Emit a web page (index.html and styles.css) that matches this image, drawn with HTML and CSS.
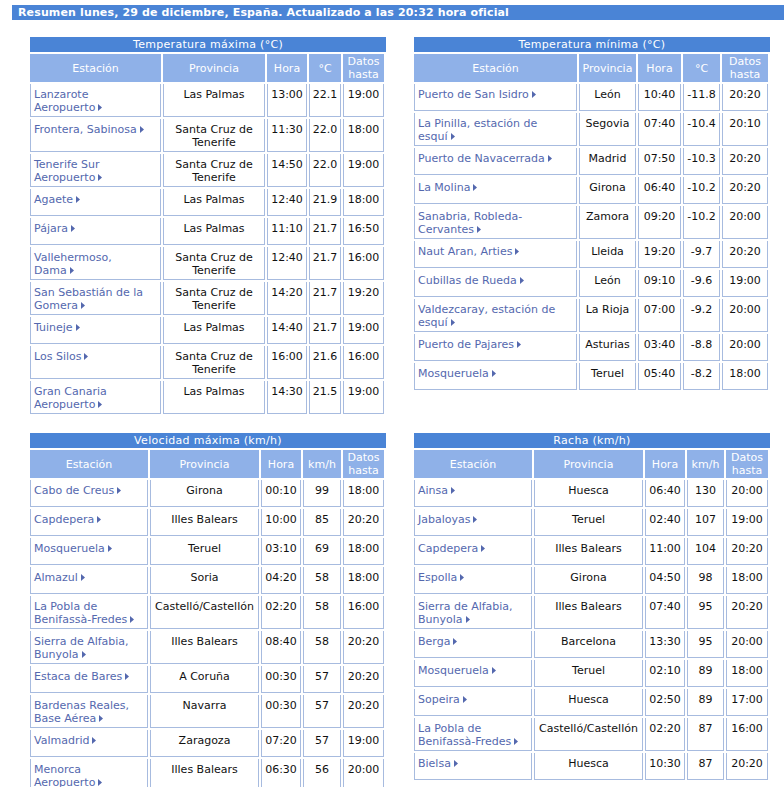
FILE: index.html
```html
<!DOCTYPE html>
<html lang="es">
<head>
<meta charset="utf-8">
<title>Resumen</title>
<link rel="stylesheet" href="styles.css">
</head>
<body>
<div class="topbar">Resumen lunes, 29 de diciembre, España. Actualizado a las 20:32 hora oficial</div>
<div class="grid">

<section class="block">
<div class="title">Temperatura máxima (°C)</div>
<table class="t">
<thead><tr>
<th class="c1a">Estación</th><th class="c2a">Provincia</th><th class="c3a">Hora</th><th class="c4a">°C</th><th class="c5a">Datos<br>hasta</th>
</tr></thead>
<tbody>
<tr><td class="st"><div class="in">Lanzarote<br>Aeropuerto<svg class="ar" width="4" height="7" viewBox="0 0 4 7"><polygon points="0,0 4,3.5 0,7"/></svg></div></td><td><div class="in">Las Palmas</div></td><td><div class="in">13:00</div></td><td><div class="in">22.1</div></td><td><div class="in">19:00</div></td></tr>
<tr><td class="st"><div class="in">Frontera, Sabinosa<svg class="ar" width="4" height="7" viewBox="0 0 4 7"><polygon points="0,0 4,3.5 0,7"/></svg></div></td><td><div class="in">Santa Cruz de<br>Tenerife</div></td><td><div class="in">11:30</div></td><td><div class="in">22.0</div></td><td><div class="in">18:00</div></td></tr>
<tr><td class="st"><div class="in">Tenerife Sur<br>Aeropuerto<svg class="ar" width="4" height="7" viewBox="0 0 4 7"><polygon points="0,0 4,3.5 0,7"/></svg></div></td><td><div class="in">Santa Cruz de<br>Tenerife</div></td><td><div class="in">14:50</div></td><td><div class="in">22.0</div></td><td><div class="in">19:00</div></td></tr>
<tr><td class="st"><div class="in">Agaete<svg class="ar" width="4" height="7" viewBox="0 0 4 7"><polygon points="0,0 4,3.5 0,7"/></svg></div></td><td><div class="in">Las Palmas</div></td><td><div class="in">12:40</div></td><td><div class="in">21.9</div></td><td><div class="in">18:00</div></td></tr>
<tr><td class="st"><div class="in">Pájara<svg class="ar" width="4" height="7" viewBox="0 0 4 7"><polygon points="0,0 4,3.5 0,7"/></svg></div></td><td><div class="in">Las Palmas</div></td><td><div class="in">11:10</div></td><td><div class="in">21.7</div></td><td><div class="in">16:50</div></td></tr>
<tr><td class="st"><div class="in">Vallehermoso,<br>Dama<svg class="ar" width="4" height="7" viewBox="0 0 4 7"><polygon points="0,0 4,3.5 0,7"/></svg></div></td><td><div class="in">Santa Cruz de<br>Tenerife</div></td><td><div class="in">12:40</div></td><td><div class="in">21.7</div></td><td><div class="in">16:00</div></td></tr>
<tr><td class="st"><div class="in">San Sebastián de la<br>Gomera<svg class="ar" width="4" height="7" viewBox="0 0 4 7"><polygon points="0,0 4,3.5 0,7"/></svg></div></td><td><div class="in">Santa Cruz de<br>Tenerife</div></td><td><div class="in">14:20</div></td><td><div class="in">21.7</div></td><td><div class="in">19:20</div></td></tr>
<tr><td class="st"><div class="in">Tuineje<svg class="ar" width="4" height="7" viewBox="0 0 4 7"><polygon points="0,0 4,3.5 0,7"/></svg></div></td><td><div class="in">Las Palmas</div></td><td><div class="in">14:40</div></td><td><div class="in">21.7</div></td><td><div class="in">19:00</div></td></tr>
<tr><td class="st"><div class="in">Los Silos<svg class="ar" width="4" height="7" viewBox="0 0 4 7"><polygon points="0,0 4,3.5 0,7"/></svg></div></td><td><div class="in">Santa Cruz de<br>Tenerife</div></td><td><div class="in">16:00</div></td><td><div class="in">21.6</div></td><td><div class="in">16:00</div></td></tr>
<tr><td class="st"><div class="in">Gran Canaria<br>Aeropuerto<svg class="ar" width="4" height="7" viewBox="0 0 4 7"><polygon points="0,0 4,3.5 0,7"/></svg></div></td><td><div class="in">Las Palmas</div></td><td><div class="in">14:30</div></td><td><div class="in">21.5</div></td><td><div class="in">19:00</div></td></tr>
</tbody>
</table>
</section>

<section class="block">
<div class="title">Temperatura mínima (°C)</div>
<table class="t">
<thead><tr>
<th class="c1b">Estación</th><th class="c2b">Provincia</th><th class="c3b">Hora</th><th class="c4b">°C</th><th class="c5b">Datos<br>hasta</th>
</tr></thead>
<tbody>
<tr><td class="st"><div class="in">Puerto de San Isidro<svg class="ar" width="4" height="7" viewBox="0 0 4 7"><polygon points="0,0 4,3.5 0,7"/></svg></div></td><td><div class="in">León</div></td><td><div class="in">10:40</div></td><td><div class="in">-11.8</div></td><td><div class="in">20:20</div></td></tr>
<tr><td class="st"><div class="in">La Pinilla, estación de<br>esquí<svg class="ar" width="4" height="7" viewBox="0 0 4 7"><polygon points="0,0 4,3.5 0,7"/></svg></div></td><td><div class="in">Segovia</div></td><td><div class="in">07:40</div></td><td><div class="in">-10.4</div></td><td><div class="in">20:10</div></td></tr>
<tr><td class="st"><div class="in">Puerto de Navacerrada<svg class="ar" width="4" height="7" viewBox="0 0 4 7"><polygon points="0,0 4,3.5 0,7"/></svg></div></td><td><div class="in">Madrid</div></td><td><div class="in">07:50</div></td><td><div class="in">-10.3</div></td><td><div class="in">20:20</div></td></tr>
<tr><td class="st"><div class="in">La Molina<svg class="ar" width="4" height="7" viewBox="0 0 4 7"><polygon points="0,0 4,3.5 0,7"/></svg></div></td><td><div class="in">Girona</div></td><td><div class="in">06:40</div></td><td><div class="in">-10.2</div></td><td><div class="in">20:20</div></td></tr>
<tr><td class="st"><div class="in">Sanabria, Robleda-<br>Cervantes<svg class="ar" width="4" height="7" viewBox="0 0 4 7"><polygon points="0,0 4,3.5 0,7"/></svg></div></td><td><div class="in">Zamora</div></td><td><div class="in">09:20</div></td><td><div class="in">-10.2</div></td><td><div class="in">20:00</div></td></tr>
<tr><td class="st"><div class="in">Naut Aran, Arties<svg class="ar" width="4" height="7" viewBox="0 0 4 7"><polygon points="0,0 4,3.5 0,7"/></svg></div></td><td><div class="in">Lleida</div></td><td><div class="in">19:20</div></td><td><div class="in">-9.7</div></td><td><div class="in">20:20</div></td></tr>
<tr><td class="st"><div class="in">Cubillas de Rueda<svg class="ar" width="4" height="7" viewBox="0 0 4 7"><polygon points="0,0 4,3.5 0,7"/></svg></div></td><td><div class="in">León</div></td><td><div class="in">09:10</div></td><td><div class="in">-9.6</div></td><td><div class="in">19:00</div></td></tr>
<tr><td class="st"><div class="in">Valdezcaray, estación de<br>esquí<svg class="ar" width="4" height="7" viewBox="0 0 4 7"><polygon points="0,0 4,3.5 0,7"/></svg></div></td><td><div class="in">La Rioja</div></td><td><div class="in">07:00</div></td><td><div class="in">-9.2</div></td><td><div class="in">20:00</div></td></tr>
<tr><td class="st"><div class="in">Puerto de Pajares<svg class="ar" width="4" height="7" viewBox="0 0 4 7"><polygon points="0,0 4,3.5 0,7"/></svg></div></td><td><div class="in">Asturias</div></td><td><div class="in">03:40</div></td><td><div class="in">-8.8</div></td><td><div class="in">20:00</div></td></tr>
<tr><td class="st"><div class="in">Mosqueruela<svg class="ar" width="4" height="7" viewBox="0 0 4 7"><polygon points="0,0 4,3.5 0,7"/></svg></div></td><td><div class="in">Teruel</div></td><td><div class="in">05:40</div></td><td><div class="in">-8.2</div></td><td><div class="in">18:00</div></td></tr>
</tbody>
</table>
</section>

<section class="block">
<div class="title">Velocidad máxima (km/h)</div>
<table class="t">
<thead><tr>
<th class="c1c">Estación</th><th class="c2c">Provincia</th><th class="c3c">Hora</th><th class="c4c">km/h</th><th class="c5c">Datos<br>hasta</th>
</tr></thead>
<tbody>
<tr><td class="st"><div class="in">Cabo de Creus<svg class="ar" width="4" height="7" viewBox="0 0 4 7"><polygon points="0,0 4,3.5 0,7"/></svg></div></td><td><div class="in">Girona</div></td><td><div class="in">00:10</div></td><td><div class="in">99</div></td><td><div class="in">18:00</div></td></tr>
<tr><td class="st"><div class="in">Capdepera<svg class="ar" width="4" height="7" viewBox="0 0 4 7"><polygon points="0,0 4,3.5 0,7"/></svg></div></td><td><div class="in">Illes Balears</div></td><td><div class="in">10:00</div></td><td><div class="in">85</div></td><td><div class="in">20:20</div></td></tr>
<tr><td class="st"><div class="in">Mosqueruela<svg class="ar" width="4" height="7" viewBox="0 0 4 7"><polygon points="0,0 4,3.5 0,7"/></svg></div></td><td><div class="in">Teruel</div></td><td><div class="in">03:10</div></td><td><div class="in">69</div></td><td><div class="in">18:00</div></td></tr>
<tr><td class="st"><div class="in">Almazul<svg class="ar" width="4" height="7" viewBox="0 0 4 7"><polygon points="0,0 4,3.5 0,7"/></svg></div></td><td><div class="in">Soria</div></td><td><div class="in">04:20</div></td><td><div class="in">58</div></td><td><div class="in">18:00</div></td></tr>
<tr><td class="st"><div class="in">La Pobla de<br>Benifassà-Fredes<svg class="ar" width="4" height="7" viewBox="0 0 4 7"><polygon points="0,0 4,3.5 0,7"/></svg></div></td><td><div class="in">Castelló/Castellón</div></td><td><div class="in">02:20</div></td><td><div class="in">58</div></td><td><div class="in">16:00</div></td></tr>
<tr><td class="st"><div class="in">Sierra de Alfabia,<br>Bunyola<svg class="ar" width="4" height="7" viewBox="0 0 4 7"><polygon points="0,0 4,3.5 0,7"/></svg></div></td><td><div class="in">Illes Balears</div></td><td><div class="in">08:40</div></td><td><div class="in">58</div></td><td><div class="in">20:20</div></td></tr>
<tr><td class="st"><div class="in">Estaca de Bares<svg class="ar" width="4" height="7" viewBox="0 0 4 7"><polygon points="0,0 4,3.5 0,7"/></svg></div></td><td><div class="in">A Coruña</div></td><td><div class="in">00:30</div></td><td><div class="in">57</div></td><td><div class="in">20:20</div></td></tr>
<tr><td class="st"><div class="in">Bardenas Reales,<br>Base Aérea<svg class="ar" width="4" height="7" viewBox="0 0 4 7"><polygon points="0,0 4,3.5 0,7"/></svg></div></td><td><div class="in">Navarra</div></td><td><div class="in">00:30</div></td><td><div class="in">57</div></td><td><div class="in">20:20</div></td></tr>
<tr><td class="st"><div class="in">Valmadrid<svg class="ar" width="4" height="7" viewBox="0 0 4 7"><polygon points="0,0 4,3.5 0,7"/></svg></div></td><td><div class="in">Zaragoza</div></td><td><div class="in">07:20</div></td><td><div class="in">57</div></td><td><div class="in">19:00</div></td></tr>
<tr><td class="st"><div class="in">Menorca<br>Aeropuerto<svg class="ar" width="4" height="7" viewBox="0 0 4 7"><polygon points="0,0 4,3.5 0,7"/></svg></div></td><td><div class="in">Illes Balears</div></td><td><div class="in">06:30</div></td><td><div class="in">56</div></td><td><div class="in">20:00</div></td></tr>
</tbody>
</table>
</section>

<section class="block">
<div class="title">Racha (km/h)</div>
<table class="t">
<thead><tr>
<th class="c1d">Estación</th><th class="c2d">Provincia</th><th class="c3d">Hora</th><th class="c4d">km/h</th><th class="c5d">Datos<br>hasta</th>
</tr></thead>
<tbody>
<tr><td class="st"><div class="in">Ainsa<svg class="ar" width="4" height="7" viewBox="0 0 4 7"><polygon points="0,0 4,3.5 0,7"/></svg></div></td><td><div class="in">Huesca</div></td><td><div class="in">06:40</div></td><td><div class="in">130</div></td><td><div class="in">20:00</div></td></tr>
<tr><td class="st"><div class="in">Jabaloyas<svg class="ar" width="4" height="7" viewBox="0 0 4 7"><polygon points="0,0 4,3.5 0,7"/></svg></div></td><td><div class="in">Teruel</div></td><td><div class="in">02:40</div></td><td><div class="in">107</div></td><td><div class="in">19:00</div></td></tr>
<tr><td class="st"><div class="in">Capdepera<svg class="ar" width="4" height="7" viewBox="0 0 4 7"><polygon points="0,0 4,3.5 0,7"/></svg></div></td><td><div class="in">Illes Balears</div></td><td><div class="in">11:00</div></td><td><div class="in">104</div></td><td><div class="in">20:20</div></td></tr>
<tr><td class="st"><div class="in">Espolla<svg class="ar" width="4" height="7" viewBox="0 0 4 7"><polygon points="0,0 4,3.5 0,7"/></svg></div></td><td><div class="in">Girona</div></td><td><div class="in">04:50</div></td><td><div class="in">98</div></td><td><div class="in">18:00</div></td></tr>
<tr><td class="st"><div class="in">Sierra de Alfabia,<br>Bunyola<svg class="ar" width="4" height="7" viewBox="0 0 4 7"><polygon points="0,0 4,3.5 0,7"/></svg></div></td><td><div class="in">Illes Balears</div></td><td><div class="in">07:40</div></td><td><div class="in">95</div></td><td><div class="in">20:20</div></td></tr>
<tr><td class="st"><div class="in">Berga<svg class="ar" width="4" height="7" viewBox="0 0 4 7"><polygon points="0,0 4,3.5 0,7"/></svg></div></td><td><div class="in">Barcelona</div></td><td><div class="in">13:30</div></td><td><div class="in">95</div></td><td><div class="in">20:00</div></td></tr>
<tr><td class="st"><div class="in">Mosqueruela<svg class="ar" width="4" height="7" viewBox="0 0 4 7"><polygon points="0,0 4,3.5 0,7"/></svg></div></td><td><div class="in">Teruel</div></td><td><div class="in">02:10</div></td><td><div class="in">89</div></td><td><div class="in">18:00</div></td></tr>
<tr><td class="st"><div class="in">Sopeira<svg class="ar" width="4" height="7" viewBox="0 0 4 7"><polygon points="0,0 4,3.5 0,7"/></svg></div></td><td><div class="in">Huesca</div></td><td><div class="in">02:50</div></td><td><div class="in">89</div></td><td><div class="in">17:00</div></td></tr>
<tr><td class="st"><div class="in">La Pobla de<br>Benifassà-Fredes<svg class="ar" width="4" height="7" viewBox="0 0 4 7"><polygon points="0,0 4,3.5 0,7"/></svg></div></td><td><div class="in">Castelló/Castellón</div></td><td><div class="in">02:20</div></td><td><div class="in">87</div></td><td><div class="in">16:00</div></td></tr>
<tr><td class="st"><div class="in">Bielsa<svg class="ar" width="4" height="7" viewBox="0 0 4 7"><polygon points="0,0 4,3.5 0,7"/></svg></div></td><td><div class="in">Huesca</div></td><td><div class="in">10:30</div></td><td><div class="in">87</div></td><td><div class="in">20:20</div></td></tr>
</tbody>
</table>
</section>

</div>
</body>
</html>
```
FILE: styles.css
```css
html, body {
  margin: 0;
  padding: 0;
  background: #ffffff;
  overflow: hidden;
}
body {
  font-family: "DejaVu Sans", Verdana, sans-serif;
  font-size: 11px;
  color: #111111;
}
.topbar {
  margin: 5px 0 0 12px;
  height: 15px;
  line-height: 15px;
  padding-left: 6px;
  background: #4a84d6;
  color: #ffffff;
  font-weight: bold;
  letter-spacing: 0.14px;
  white-space: nowrap;
}
.grid {
  display: grid;
  grid-template-columns: 356px 356px;
  column-gap: 28px;
  row-gap: 17px;
  align-items: start;
  margin: 17px 0 0 30px;
}
.title {
  height: 15px;
  line-height: 15px;
  background: #4a84d6;
  color: #ffffff;
  text-align: center;
  letter-spacing: 0.3px;
  white-space: nowrap;
}
.t {
  table-layout: fixed;
  width: 358px;
  margin-left: -2px;
  border-collapse: separate;
  border-spacing: 2px;
}
.t th {
  box-sizing: border-box;
  background: #8fb1e8;
  color: #ffffff;
  font-weight: normal;
  line-height: 13px;
  padding: 1px 1px 0;
  border-bottom: 1px solid #8fb1e8;
  text-align: center;
  vertical-align: middle;
  height: 28px;
  white-space: nowrap;
}
.t td {
  box-sizing: border-box;
  border: 1px solid #a7bbdf;
  border-top: 0;
  padding: 4px 1px 2px;
  text-align: center;
  vertical-align: top;
  white-space: nowrap;
  line-height: 13px;
}
.t td.st {
  text-align: left;
  padding-left: 3px;
  color: #5468ae;
}
.in {
  min-height: 20px;
}
.ar {
  display: inline-block;
  margin-left: 3px;
  fill: #5468ae;
  vertical-align: baseline;
}
.c1a { width: 131px; } .c2a { width: 102px; } .c3a { width: 40px; } .c4a { width: 32px; } .c5a { width: 41px; }
.c1b { width: 163px; } .c2b { width: 57px; } .c3b { width: 43px; } .c4b { width: 37px; } .c5b { width: 46px; }
.c1c { width: 118px; } .c2c { width: 109px; } .c3c { width: 40px; } .c4c { width: 38px; } .c5c { width: 41px; }
.c1d { width: 118px; } .c2d { width: 109px; } .c3d { width: 40px; } .c4d { width: 37px; } .c5d { width: 42px; }
```
